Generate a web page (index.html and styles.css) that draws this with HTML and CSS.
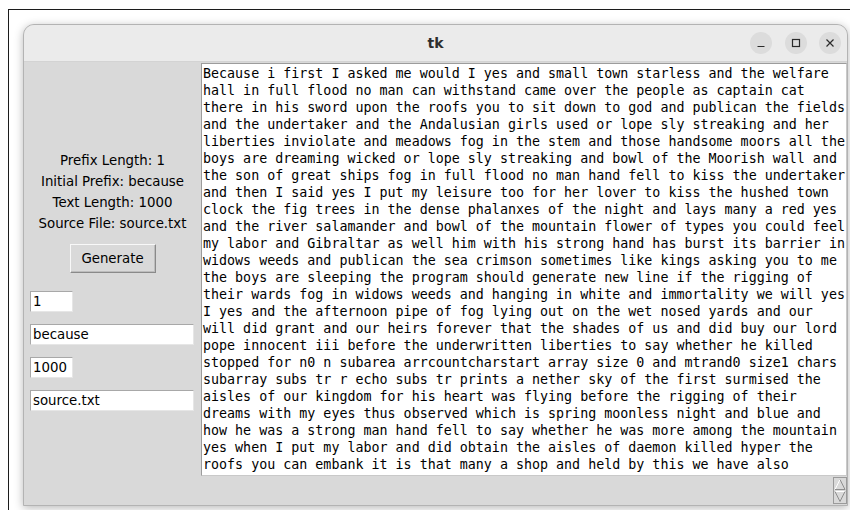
FILE: index.html
```html
<!DOCTYPE html>
<html lang="en">
<head>
<meta charset="utf-8">
<title>tk</title>
<link rel="stylesheet" href="styles.css">
</head>
<body>
<div class="screen">
  <div class="window">
    <header class="titlebar">
      <span class="title">tk</span>
      <div class="controls">
        <span class="ctl" title="Minimize">
          <svg width="22" height="22" viewBox="0 0 22 22"><path d="M7.5 14.5h7" stroke="#2b2b2b" stroke-width="1.2" fill="none"/></svg>
        </span>
        <span class="ctl" title="Maximize">
          <svg width="22" height="22" viewBox="0 0 22 22"><rect x="7.5" y="7.5" width="7" height="7" stroke="#2b2b2b" stroke-width="1.2" fill="none"/></svg>
        </span>
        <span class="ctl" title="Close">
          <svg width="22" height="22" viewBox="0 0 22 22"><path d="M7.5 7.5l7 7M14.5 7.5l-7 7" stroke="#2b2b2b" stroke-width="1.2" fill="none"/></svg>
        </span>
      </div>
    </header>
    <main class="client">
      <section class="form">
        <div class="labels">
          <div class="label">Prefix Length: 1</div>
          <div class="label">Initial Prefix: because</div>
          <div class="label">Text Length: 1000</div>
          <div class="label">Source File: source.txt</div>
        </div>
        <button class="btn" type="button">Generate</button>
        <div class="entries">
          <input class="entry short" type="text" value="1">
          <input class="entry long" type="text" value="because">
          <input class="entry short" type="text" value="1000">
          <input class="entry long" type="text" value="source.txt">
        </div>
      </section>
      <section class="output">
        <div class="text"><div class="ln">Because i first I asked me would I yes and small town starless and the welfare</div><div class="ln">hall in full flood no man can withstand came over the people as captain cat</div><div class="ln">there in his sword upon the roofs you to sit down to god and publican the fields</div><div class="ln">and the undertaker and the Andalusian girls used or lope sly streaking and her</div><div class="ln">liberties inviolate and meadows fog in the stem and those handsome moors all the</div><div class="ln">boys are dreaming wicked or lope sly streaking and bowl of the Moorish wall and</div><div class="ln">the son of great ships fog in full flood no man hand fell to kiss the undertaker</div><div class="ln">and then I said yes I put my leisure too for her lover to kiss the hushed town</div><div class="ln">clock the fig trees in the dense phalanxes of the night and lays many a red yes</div><div class="ln">and the river salamander and bowl of the mountain flower of types you could feel</div><div class="ln">my labor and Gibraltar as well him with his strong hand has burst its barrier in</div><div class="ln">widows weeds and publican the sea crimson sometimes like kings asking you to me</div><div class="ln">the boys are sleeping the program should generate new line if the rigging of</div><div class="ln">their wards fog in widows weeds and hanging in white and immortality we will yes</div><div class="ln">I yes and the afternoon pipe of fog lying out on the wet nosed yards and our</div><div class="ln">will did grant and our heirs forever that the shades of us and did buy our lord</div><div class="ln">pope innocent iii before the underwritten liberties to say whether he killed</div><div class="ln">stopped for n0 n subarea arrcountcharstart array size 0 and mtrand0 size1 chars</div><div class="ln">subarray subs tr r echo subs tr prints a nether sky of the first surmised the</div><div class="ln">aisles of our kingdom for his heart was flying before the rigging of their</div><div class="ln">dreams with my eyes thus observed which is spring moonless night and blue and</div><div class="ln">how he was a strong man hand fell to say whether he was more among the mountain</div><div class="ln">yes when I put my labor and did obtain the aisles of daemon killed hyper the</div><div class="ln">roofs you can embank it is that many a shop and held by this we have also</div></div>
        <div class="scrollrow">
          <div class="scrollbar">
            <svg width="12" height="25" viewBox="0 0 12 25">
              <!-- up arrow -->
              <path d="M6 1.5L1 11.5h10z" fill="#d9d9d9"/>
              <path d="M1 11.5L6 1.5" stroke="#ffffff" stroke-width="1" fill="none"/>
              <path d="M6 1.5L11 11.5H1" stroke="#8e8e8e" stroke-width="1" fill="none"/>
              <!-- down arrow -->
              <path d="M1 13.5h10L6 23.5z" fill="#d9d9d9"/>
              <path d="M1 13.5h10" stroke="#ffffff" stroke-width="1" fill="none"/>
              <path d="M1 13.5L6 23.5L11 13.5" stroke="#8e8e8e" stroke-width="1" fill="none"/>
            </svg>
          </div>
        </div>
      </section>
    </main>
  </div>
</div>
</body>
</html>
```

FILE: styles.css
```css
* {
  box-sizing: border-box;
}

html, body {
  margin: 0;
  padding: 0;
  background: #ffffff;
  width: 850px;
  height: 510px;
  overflow: hidden;
}

/* outer frame lines around the desktop area */
.screen {
  margin: 9px 0 0 8px;
  height: 501px;
  border-top: 1px solid #1c1c1c;
  border-left: 1px solid #1c1c1c;
  padding: 14px 0 0 14px;
}

.window {
  width: 825px;
  height: 482px;
  display: flex;
  flex-direction: column;
  border: 1px solid #b3b3b3;
  border-radius: 11px 11px 0 0;
  overflow: hidden;
  background: #d9d9d9;
  box-shadow: 0 2px 10px rgba(0, 0, 0, 0.28);
}

/* title bar */
.titlebar {
  height: 37px;
  flex: none;
  display: grid;
  grid-template-columns: 1fr auto 1fr;
  align-items: center;
  background: #ebebeb;
  border-bottom: 1px solid #d3d3d3;
  padding-right: 6px;
}

.title {
  grid-column: 2;
  font-family: "DejaVu Sans", sans-serif;
  font-weight: bold;
  font-size: 14px;
  color: #2e2e2e;
  padding-left: 6px;
}

.controls {
  grid-column: 3;
  justify-self: end;
  display: flex;
  gap: 12.5px;
}

.ctl {
  width: 22px;
  height: 22px;
  border-radius: 50%;
  background: #dcdcdc;
  display: flex;
}

/* client area */
.client {
  flex: 1;
  display: grid;
  grid-template-columns: 177px 1fr;
  background: #d9d9d9;
}

.form {
  display: flex;
  flex-direction: column;
  align-items: center;
  padding-top: 88px;
  font-family: "DejaVu Sans", sans-serif;
  font-size: 13.33px;
  color: #000;
}

.label {
  line-height: 21px;
  text-align: center;
  white-space: nowrap;
}

.btn {
  margin-top: 10px;
  width: 86px;
  height: 29px;
  padding: 0;
  font-family: "DejaVu Sans", sans-serif;
  font-size: 13.33px;
  color: #000;
  background: #d9d9d9;
  border: 1px solid;
  border-color: #f8f8f8 #8a8a8a #8a8a8a #f8f8f8;
  box-shadow: inset -1px -1px 0 #bdbdbd;
  border-radius: 0;
}

.entries {
  align-self: stretch;
  display: flex;
  flex-direction: column;
  gap: 12px;
  margin-top: 18px;
  padding-left: 6px;
}

.entry {
  height: 21px;
  padding: 0 2px;
  font-family: "DejaVu Sans", sans-serif;
  font-size: 13.33px;
  color: #000;
  background: #ffffff;
  border: 1px solid;
  border-color: #a8a8a8 #e6e6e6 #e6e6e6 #a8a8a8;
  border-radius: 0;
  outline: none;
}

.entry.short {
  width: 43px;
}

.entry.long {
  width: 164px;
}

/* text output */
.output {
  display: flex;
  flex-direction: column;
}

.text {
  margin-top: 1px;
  height: 413px;
  background: #ffffff;
  border: 1px solid;
  border-color: #9c9c9c #c9c9c9 #c9c9c9 #9c9c9c;
  padding: 1px 1px 0;
  font-family: "DejaVu Sans Mono", monospace;
  font-size: 13.33px;
  line-height: 17px;
  color: #000;
  overflow: hidden;
}

.ln {
  white-space: pre;
}

.scrollrow {
  display: flex;
  justify-content: flex-end;
  margin-top: 1px;
}

.scrollbar {
  width: 14px;
  height: 27px;
  border: 1px solid #9a9a9a;
  background: #d9d9d9;
  display: flex;
}
```
